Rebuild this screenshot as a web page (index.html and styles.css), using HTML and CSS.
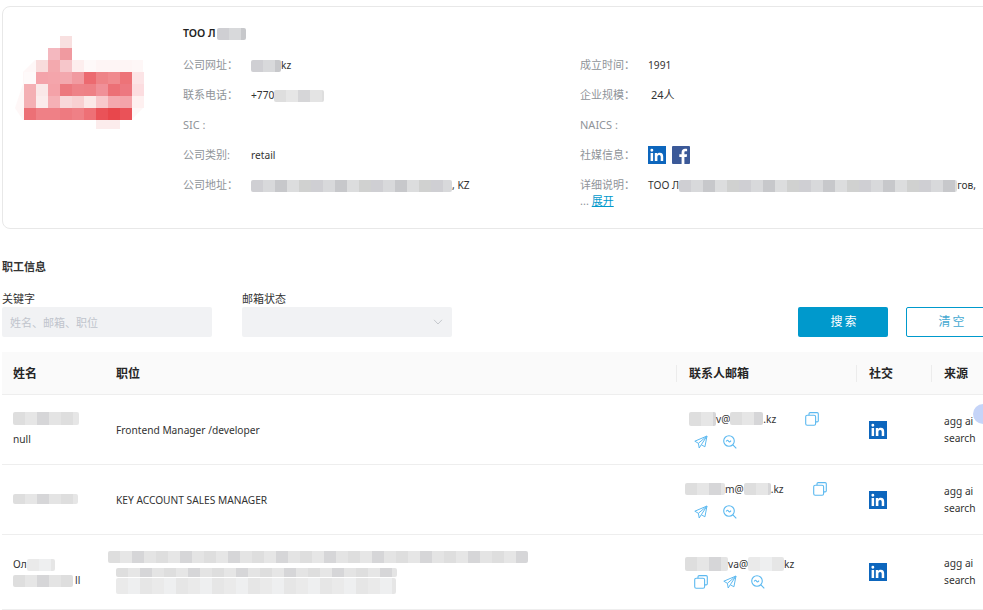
FILE: index.html
```html
<!DOCTYPE html>
<html lang="zh">
<head>
<meta charset="utf-8">
<title>公司详情</title>
<link rel="stylesheet" href="styles.css">
</head>
<body>
<svg class="defs" aria-hidden="true">
  <symbol id="in" viewBox="0 0 18 18">
    <rect width="18" height="18" fill="#0d66bd"/>
    <path fill="#fff" d="M2.6 7h2.5v8H2.600zM3.850 2.800a1.450 1.450 0 1 1 0 2.900 1.450 1.450 0 0 1 0-2.900zM6.800 7h2.400v1.100c.5-.8 1.400-1.300 2.600-1.300 2.500 0 3.400 1.500 3.400 3.900V15h-2.500v-3.800c0-1.200-.3-2.200-1.500-2.200s-1.800.9-1.800 2.200V15H6.800z"/>
  </symbol>
  <symbol id="fb" viewBox="0 0 18 18">
    <rect width="18" height="18" rx="1" fill="#3b5998"/>
    <path fill="#fff" d="M12.400 18v-7h2.300l.4-2.700h-2.700V6.600c0-.8.2-1.300 1.300-1.300h1.400V2.900c-.3 0-1.100-.1-2-.1-2.100 0-3.500 1.300-3.500 3.600v1.900H7.300V11h2.300v7z"/>
  </symbol>
  <symbol id="copy" viewBox="0 0 14 14">
    <path fill="none" stroke="#5cb9f0" stroke-width="1.100" d="M4 3.200V1.800A1.200 1.200 0 0 1 5.200.6h6.900a1.200 1.200 0 0 1 1.200 1.200v6.900a1.200 1.200 0 0 1-1.200 1.200h-1.500"/>
    <rect x=".7" y="3.200" width="9.900" height="10.100" rx="1.500" fill="none" stroke="#5cb9f0" stroke-width="1.100"/>
  </symbol>
  <symbol id="send" viewBox="0 0 14 14">
    <path fill="none" stroke="#5cb9f0" stroke-width="1" stroke-linejoin="round" d="M.8 6.200 13 1 10.900 11.800 7.300 9.700 5.200 13 4.400 8.300zM13 1 4.400 8.300M13 1 7.300 9.700"/>
  </symbol>
  <symbol id="lens" viewBox="0 0 14 14">
    <circle cx="6" cy="6" r="5.300" fill="none" stroke="#5cb9f0" stroke-width="1.100"/>
    <path fill="none" stroke="#5cb9f0" stroke-width="1.100" d="m9.900 9.900 3.400 3.400M3.200 6.500c.8-1.500 1.500-1.500 2.300-.4s1.500 1.100 2.500-.5"/>
  </symbol>
</svg>

<main class="page">
  <section class="card">
    <div class="logo">
      <svg width="156" height="130" viewBox="0 0 156 130" aria-label="logo">
        <path fill="#fef7f7" d="M23 24H131V72L119 84H11L3 72 11 48 11 36Z"/>
        <rect x="48" y="0" width="12" height="12" fill="#f8e0e0"/>
        <rect x="36" y="12" width="12" height="12" fill="#f4b8bf"/><rect x="48" y="12" width="12" height="12" fill="#f09aa0"/>
        <rect x="24" y="24" width="12" height="12" fill="#f8dcdc"/><rect x="36" y="24" width="12" height="12" fill="#f3a9ae"/><rect x="48" y="24" width="12" height="12" fill="#f6c6ca"/><rect x="60" y="24" width="12" height="12" fill="#fdeeee"/><rect x="72" y="24" width="12" height="12" fill="#fef9f9"/><rect x="84" y="24" width="36" height="12" fill="#fef5f5"/>
        <rect x="12" y="36" width="12" height="12" fill="#fefafa"/><rect x="24" y="36" width="12" height="12" fill="#f4a3aa"/><rect x="36" y="36" width="12" height="12" fill="#f4a5ab"/><rect x="48" y="36" width="12" height="12" fill="#f3a8ae"/><rect x="60" y="36" width="12" height="12" fill="#f19aa0"/><rect x="72" y="36" width="12" height="12" fill="#ec6a70"/><rect x="84" y="36" width="12" height="12" fill="#ee8387"/><rect x="96" y="36" width="12" height="12" fill="#f08a8e"/><rect x="108" y="36" width="12" height="12" fill="#ed7378"/><rect x="120" y="36" width="12" height="12" fill="#fce4e6"/>
        <rect x="12" y="48" width="12" height="12" fill="#f4b0b4"/><rect x="24" y="48" width="12" height="12" fill="#fae8e8"/><rect x="36" y="48" width="12" height="12" fill="#f4a2a8"/><rect x="48" y="48" width="12" height="12" fill="#ec787e"/><rect x="60" y="48" width="12" height="12" fill="#ee8288"/><rect x="72" y="48" width="12" height="12" fill="#ee8086"/><rect x="84" y="48" width="12" height="12" fill="#f09098"/><rect x="96" y="48" width="12" height="12" fill="#ec7076"/><rect x="108" y="48" width="12" height="12" fill="#ed7880"/><rect x="120" y="48" width="12" height="12" fill="#fcdde0"/>
        <rect x="12" y="60" width="12" height="12" fill="#f4b0b4"/><rect x="24" y="60" width="12" height="12" fill="#fbecec"/><rect x="36" y="60" width="12" height="12" fill="#f5b0b5"/><rect x="48" y="60" width="12" height="12" fill="#f8d8da"/><rect x="60" y="60" width="12" height="12" fill="#f8d0d2"/><rect x="72" y="60" width="12" height="12" fill="#fbe8e8"/><rect x="84" y="60" width="12" height="12" fill="#f8c8cc"/><rect x="96" y="60" width="12" height="12" fill="#f4a8ae"/><rect x="108" y="60" width="12" height="12" fill="#f4a4aa"/><rect x="120" y="60" width="12" height="12" fill="#fef0f0"/>
        <rect x="12" y="72" width="12" height="12" fill="#ec7076"/><rect x="24" y="72" width="12" height="12" fill="#ef8086"/><rect x="36" y="72" width="12" height="12" fill="#ef8086"/><rect x="48" y="72" width="12" height="12" fill="#ee7a80"/><rect x="60" y="72" width="12" height="12" fill="#ef8086"/><rect x="72" y="72" width="12" height="12" fill="#ee7076"/><rect x="84" y="72" width="12" height="12" fill="#ea5258"/><rect x="96" y="72" width="12" height="12" fill="#e8474c"/><rect x="108" y="72" width="12" height="12" fill="#ea5258"/>
        <rect x="84" y="84" width="24" height="9" fill="#fcecec"/>
      </svg>
    </div>
    <div class="info">
      <h1 class="company">TOO Л<span class="smear s-title"></span></h1>
      <div class="facts">
        <div class="fact"><span class="key">公司网址：</span><span class="val"><span class="smear s-site"></span>kz</span></div>
        <div class="fact"><span class="key">成立时间：</span><span class="val">1991</span></div>
        <div class="fact"><span class="key">联系电话：</span><span class="val">+770<span class="smear light s-phone"></span></span></div>
        <div class="fact"><span class="key">企业规模：</span><span class="val val-size">24人</span></div>
        <div class="fact"><span class="key">SIC :</span></div>
        <div class="fact"><span class="key">NAICS :</span></div>
        <div class="fact"><span class="key">公司类别:</span><span class="val">retail</span></div>
        <div class="fact"><span class="key">社媒信息：</span><span class="val socials"><svg class="brand"><use href="#in"/></svg><svg class="brand"><use href="#fb"/></svg></span></div>
        <div class="fact"><span class="key">公司地址：</span><span class="val"><span class="smear s-addr"></span>, KZ</span></div>
        <div class="fact fact-long"><span class="key">详细说明：</span><span class="val-inline">TOO Л<span class="smear s-desc"></span>гов,</span><br><span class="more">... <a href="#">展开</a></span></div>
      </div>
    </div>
  </section>

  <h2 class="section-title">职工信息</h2>

  <form class="filters">
    <label class="field"><span class="field-label">关键字</span><input class="control" placeholder="姓名、邮箱、职位"></label>
    <div class="field"><span class="field-label">邮箱状态</span>
      <div class="control select"><svg width="10" height="6" viewBox="0 0 10 6"><path d="m1 .8 4 4.200 4-4.200" fill="none" stroke="#c4c8cc"/></svg></div>
    </div>
    <div class="actions">
      <button type="button" class="btn primary">搜索</button>
      <button type="button" class="btn ghost">清空</button>
    </div>
  </form>

  <section class="table">
    <div class="row head">
      <div class="cell">姓名</div>
      <div class="cell">职位</div>
      <div class="cell sep">联系人邮箱</div>
      <div class="cell sep">社交</div>
      <div class="cell sep">来源</div>
    </div>

    <div class="row r1">
      <div class="cell name"><div class="smear light s-n1"></div><div class="cell-line">null</div></div>
      <div class="cell">Frontend Manager /developer</div>
      <div class="cell contact">
        <div class="mail"><span class="smear light s-m1a"></span>v@<span class="smear light s-m1b"></span>.kz<svg class="ico copy-1"><use href="#copy"/></svg></div>
        <div class="tools indent"><svg class="ico"><use href="#send"/></svg><svg class="ico"><use href="#lens"/></svg></div>
      </div>
      <div class="cell plain"><svg class="brand"><use href="#in"/></svg></div>
      <div class="cell plain src">agg ai<br>search</div>
    </div>

    <div class="row r2">
      <div class="cell name"><div class="smear light s-n2"></div></div>
      <div class="cell">KEY ACCOUNT SALES MANAGER</div>
      <div class="cell contact">
        <div class="mail"><span class="smear light s-m2a"></span>m@<span class="smear light s-m2b"></span>.kz<svg class="ico copy-2"><use href="#copy"/></svg></div>
        <div class="tools indent"><svg class="ico"><use href="#send"/></svg><svg class="ico"><use href="#lens"/></svg></div>
      </div>
      <div class="cell plain"><svg class="brand"><use href="#in"/></svg></div>
      <div class="cell plain src">agg ai<br>search</div>
    </div>

    <div class="row r3">
      <div class="cell name"><div class="cell-line">Ол<span class="smear pale s-n3a"></span></div><div class="cell-line"><span class="smear light s-n3b"></span>ll</div></div>
      <div class="cell title-smears"><div class="smear light s-t1"></div><div class="smear light s-t2"></div><div class="smear pale s-t3"></div></div>
      <div class="cell contact">
        <div class="mail"><span class="smear light s-m3a"></span>va@<span class="smear pale s-m3b"></span>kz</div>
        <div class="tools indent"><svg class="ico"><use href="#copy"/></svg><svg class="ico"><use href="#send"/></svg><svg class="ico"><use href="#lens"/></svg></div>
      </div>
      <div class="cell plain"><svg class="brand"><use href="#in"/></svg></div>
      <div class="cell plain src">agg ai<br>search</div>
    </div>
  </section>
  <div class="float-dot"></div>
</main>
</body>
</html>
```
FILE: styles.css
```css
* { box-sizing: border-box; }
html, body { margin: 0; height: 100%; overflow: hidden; background: #fff; }
body {
  font-family: "Noto Sans", "Noto Sans CJK SC", sans-serif;
  font-size: 10.200px;
  line-height: 16px;
  color: #333;
}
.defs { position: absolute; width: 0; height: 0; }
.page { width: 1040px; padding: 6px 0 0 2px; }

.smear {
  display: inline-block;
  height: 12px;
  vertical-align: middle;
  border-radius: 2px;
  background: repeating-linear-gradient(90deg, #cfcfd3 0 12px, #d8d9db 12px 24px, #c7c8cb 24px 36px, #dcddde 36px 48px, #d0d1d0 48px 60px);
}
.smear.light { background: repeating-linear-gradient(90deg, #dedede 0 12px, #e6e6e6 12px 24px, #d6d6d8 24px 36px, #e4e4e4 36px 48px); }
.smear.pale { background: repeating-linear-gradient(90deg, #eaeaea 0 12px, #eeeff0 12px 24px, #e6e6e6 24px 36px); }

.card {
  display: flex;
  height: 223px;
  border: 1px solid #e8e8e8;
  border-radius: 8px;
  background: #fff;
}
.logo { width: 180px; padding: 29px 0 0 9px; flex: none; }
.logo svg { display: block; }
.info { flex: 1; padding-top: 18px; }
.company { margin: 0; font-size: 10.500px; line-height: 16px; font-weight: 600; color: #222; }
.s-title { width: 29px; margin-left: 1px; }
.facts { display: grid; grid-template-columns: 397px 1fr; grid-auto-rows: 30px; margin-top: 9px; }
.fact { display: flex; align-items: center; }
.key { width: 68px; flex: none; color: #8f9499; font-size: 11px; }
.val-size { padding-left: 3px; font-size: 11px; }
.s-site { width: 30px; }
.s-phone { width: 50px; height: 12px; }
.s-addr { width: 201px; }
.socials { display: flex; gap: 6px; }
.brand { display: block; width: 18px; height: 18px; }
.fact-long { display: block; align-self: start; padding-top: 7px; white-space: nowrap; }
.fact-long .key { display: inline-block; }
.s-desc { width: 278px; }
.more { color: #8f9499; font-size: 11px; }
.more a { color: #0099cc; }

.section-title { margin: 30px 0 0; font-size: 11px; line-height: 16px; font-weight: 600; color: #333; }

.filters { display: flex; width: 994px; margin-top: 15px; align-items: flex-end; }
.field { display: block; width: 210px; margin-right: 30px; }
.field-label { display: block; line-height: 17px; color: #333; font-size: 11px; }
.control {
  display: block;
  width: 210px;
  height: 30px;
  border: 0;
  border-radius: 2px;
  background: #f1f2f4;
  padding: 0 8px;
  font: inherit;
  font-size: 11px;
}
.control::placeholder { color: #c0c4cc; }
.select { display: flex; align-items: center; justify-content: flex-end; padding-right: 9px; }
.actions { display: flex; gap: 18px; margin-left: auto; }
.btn {
  width: 90px;
  height: 30px;
  border-radius: 2px;
  font: inherit;
  font-size: 12px;
  letter-spacing: 2px;
  padding: 0 0 0 3px;
}
.primary { background: #0099cc; border: 0; color: #fff; }
.ghost { background: #fff; border: 1px solid #0099cc; color: #45a9d1; }

.table { margin-top: 15px; }
.row {
  display: grid;
  grid-template-columns: 103px 571px 180px 75px 109px;
  border-bottom: 1px solid #eeeeee;
}
.row.head { height: 43px; padding-top: 1px; background: #fafafa; font-size: 12px; font-weight: 700; color: #262626; }
.row.r1, .row.r2 { height: 70px; }
.row.r3 { height: 75px; }
.cell { display: flex; flex-direction: column; justify-content: center; align-items: flex-start; padding-left: 13px; position: relative; }
.row > .cell:first-child { padding-left: 11px; }
.row > .cell:nth-child(2) { padding-left: 11px; }
.sep::before { content: ""; position: absolute; left: 0; top: 12px; height: 17px; border-left: 1px solid #ececec; }
.cell-line { white-space: nowrap; }
.src { line-height: 17px; }
.s-n1 { width: 66px; height: 13px; margin-bottom: 6px; }
.s-n2 { width: 65px; height: 10px; margin-top: -2px; }
.s-n3a { width: 28px; height: 12px; }
.s-n3b { width: 60px; height: 12px; margin-right: 2px; }
.row > .title-smears { gap: 0; }
.s-t1 { width: 420px; height: 12px; margin-left: -8px; margin-bottom: 5px; }
.s-t2 { width: 281px; height: 9px; margin-bottom: 1px; }
.s-t3 { width: 280px; height: 16px; }
.r1 .contact, .r2 .contact { gap: 8px; }
.r3 .contact { gap: 3px; }
.mail { display: flex; align-items: center; white-space: nowrap; line-height: 16px; }
.ico { display: block; width: 14px; height: 14px; flex: none; }
.s-m1a { width: 27px; height: 14px; }
.s-m1b { width: 33px; height: 13px; }
.s-m2a { width: 40px; height: 12px; margin-left: -4px; }
.s-m2b { width: 27px; height: 12px; }
.s-m3a { width: 43px; height: 14px; margin-left: -4px; }
.s-m3b { width: 36px; height: 14px; }
.copy-1 { margin-left: 29px; }
.copy-2 { margin-left: 29px; }
.tools { display: flex; gap: 14.500px; }
.indent { padding-left: 5px; }
.float-dot { position: absolute; right: -10px; top: 404px; width: 20px; height: 20px; border-radius: 50%; background: #c5d4f8; }
```
